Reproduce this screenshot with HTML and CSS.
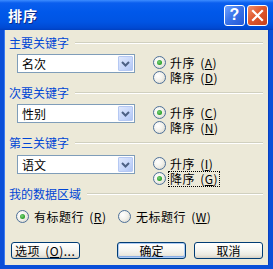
FILE: index.html
```html
<!DOCTYPE html>
<html>
<head>
<meta charset="utf-8">
<link rel="stylesheet" href="styles.css">
</head>
<body>
<div class="win">
  <div class="titlebar">
    <span class="title">排序</span>
    <div class="tbtns">
      <span class="tb help">?</span>
      <span class="tb close"><svg width="13" height="13" viewBox="0 0 13 13"><path d="M2 2 L11 11 M11 2 L2 11" stroke="#fff" stroke-width="2.2" stroke-linecap="square"/></svg></span>
    </div>
  </div>
  <div class="body">
    <section class="group">
      <div class="ghead"><span class="glabel">主要关键字</span><span class="gline"></span></div>
      <div class="grow">
        <div class="combo"><span class="ctext">名次</span><span class="cbtn"><svg width="9" height="6" viewBox="0 0 9 6"><path d="M1 1 L4.5 4.5 L8 1" fill="none" stroke="#4D6185" stroke-width="2"/></svg></span></div>
        <div class="radios">
          <div class="radio"><span class="rb on"></span><span class="rt">升序 (<u>A</u>)</span></div>
          <div class="radio"><span class="rb"></span><span class="rt">降序 (<u>D</u>)</span></div>
        </div>
      </div>
    </section>
    <section class="group">
      <div class="ghead"><span class="glabel">次要关键字</span><span class="gline"></span></div>
      <div class="grow">
        <div class="combo"><span class="ctext">性别</span><span class="cbtn"><svg width="9" height="6" viewBox="0 0 9 6"><path d="M1 1 L4.5 4.5 L8 1" fill="none" stroke="#4D6185" stroke-width="2"/></svg></span></div>
        <div class="radios">
          <div class="radio"><span class="rb on"></span><span class="rt">升序 (<u>C</u>)</span></div>
          <div class="radio"><span class="rb"></span><span class="rt">降序 (<u>N</u>)</span></div>
        </div>
      </div>
    </section>
    <section class="group g3">
      <div class="ghead"><span class="glabel">第三关键字</span><span class="gline"></span></div>
      <div class="grow">
        <div class="combo"><span class="ctext">语文</span><span class="cbtn"><svg width="9" height="6" viewBox="0 0 9 6"><path d="M1 1 L4.5 4.5 L8 1" fill="none" stroke="#4D6185" stroke-width="2"/></svg></span></div>
        <div class="radios">
          <div class="radio"><span class="rb"></span><span class="rt">升序 (<u>I</u>)</span></div>
          <div class="radio"><span class="rb on"></span><span class="rt focus">降序 (<u>G</u>)</span></div>
        </div>
      </div>
    </section>
    <section class="g4">
      <div class="ghead"><span class="glabel">我的数据区域</span><span class="gline"></span></div>
      <div class="hrow">
        <div class="radio first"><span class="rb on"></span><span class="rt">有标题行 (<u>R</u>)</span></div>
        <div class="radio"><span class="rb"></span><span class="rt">无标题行 (<u>W</u>)</span></div>
      </div>
    </section>
    <div class="buttons">
      <span class="btn first">选项 (<u>O</u>)...</span>
      <span class="btn default push">确定</span>
      <span class="btn">取消</span>
    </div>
  </div>
</div>
</body>
</html>
```
FILE: styles.css
```css
html, body {
  margin: 0;
  padding: 0;
  background: #0a4fd8;
}
.win {
  width: 273px;
  height: 269px;
  display: flex;
  flex-direction: column;
  font-family: "Noto Sans CJK SC", "Liberation Sans", sans-serif;
  font-size: 12px;
  color: #000;
}
.titlebar {
  height: 30px;
  flex: none;
  display: flex;
  align-items: center;
  padding: 0 5px 0 8px;
  background: linear-gradient(#3d8cff 0, #0a5eee 3px, #0058ea 12px, #0054e3 22px, #0049d2 28px, #0040c0 30px);
}
.title {
  color: #fff;
  font-weight: bold;
  font-size: 14px;
  letter-spacing: 1px;
  text-shadow: 1px 1px 0 #0a2b8a;
  flex: 1;
}
.tbtns {
  display: flex;
  gap: 2px;
}
.tb {
  width: 21px;
  height: 21px;
  box-sizing: border-box;
  border: 1px solid #fff;
  border-radius: 3px;
  display: flex;
  align-items: center;
  justify-content: center;
  color: #fff;
}
.help {
  background: linear-gradient(135deg, #6fa2ff 0%, #3a74ea 45%, #2459d6 100%);
  font-family: "Liberation Sans", sans-serif;
  font-weight: bold;
  font-size: 16px;
}
.close {
  background: linear-gradient(135deg, #f0906c 0%, #e0582d 45%, #c8401a 100%);
}
.body {
  flex: 1;
  min-height: 0;
  background: #ece9d8;
  border: 4px solid #0a4fd8;
  border-top: 0;
  box-shadow: inset 1px 0 0 #3a7af0, inset -1px 0 0 #0840c0;
  padding: 6px 6px 0 5px;
  display: flex;
  flex-direction: column;
}
.group {
  height: 50px;
  flex: none;
}
.g3 {
  height: 51px;
}
.g4 {
  flex: none;
}
.ghead {
  height: 14px;
  display: flex;
  align-items: center;
}
.glabel {
  color: #0046d5;
  line-height: 14px;
  white-space: nowrap;
}
.gline {
  flex: 1;
  margin-left: 6px;
  border-top: 1px solid #d0d0bf;
  border-bottom: 1px solid #ffffff;
}
.grow {
  display: flex;
  margin-top: 4px;
}
.g3 .grow {
  margin-top: 5px;
}
.combo {
  margin-left: 8px;
  width: 118px;
  height: 19px;
  box-sizing: border-box;
  border: 1px solid #7f9db9;
  background: #fff;
  display: flex;
  align-items: center;
  padding: 1px;
}
.ctext {
  flex: 1;
  padding-left: 3px;
  line-height: 15px;
}
.cbtn {
  width: 15px;
  height: 15px;
  box-sizing: border-box;
  border: 1px solid #b5c8f3;
  border-radius: 1px;
  background: linear-gradient(135deg, #dfe8fc 0%, #c6d6fb 60%, #b0c5f4 100%);
  display: flex;
  align-items: center;
  justify-content: center;
}
.radios {
  margin-left: 18px;
  margin-top: 1px;
  display: flex;
  flex-direction: column;
}
.radio {
  height: 15px;
  display: flex;
  align-items: center;
  gap: 3px;
  white-space: nowrap;
}
.rb {
  flex: none;
  width: 13px;
  height: 13px;
  box-sizing: border-box;
  border-radius: 50%;
  border: 1px solid #4d7099;
  background: radial-gradient(circle at 35% 35%, #ffffff 0%, #f3f2ec 45%, #d4d2c6 100%);
  display: flex;
  align-items: center;
  justify-content: center;
}
.rb.on::after {
  content: "";
  width: 5px;
  height: 5px;
  border-radius: 50%;
  background: radial-gradient(circle at 40% 40%, #7ed27e 0%, #2fa52f 60%, #1c8a1c 100%);
}
.rt {
  line-height: 14px;
  padding: 0 1px;
  letter-spacing: 0.5px;
  word-spacing: 2px;
}
.focus {
  outline: 1px dotted #000;
}
.hrow {
  display: flex;
  margin-top: 8px;
  margin-left: 7px;
}
.hrow .radio {
  gap: 4px;
}
.hrow .first {
  width: 102px;
}
.buttons {
  flex: none;
  display: flex;
  gap: 8px;
  margin-top: 18px;
  padding-left: 2px;
}
.btn {
  width: 69px;
  height: 17px;
  box-sizing: border-box;
  border: 1px solid #003c74;
  border-radius: 3px;
  background: linear-gradient(#ffffff 0%, #f6f6f2 45%, #ebe9e0 80%, #d6d0c5 100%);
  display: flex;
  align-items: center;
  justify-content: center;
  line-height: 14px;
  white-space: nowrap;
}
.btn.first {
  justify-content: flex-start;
  padding-left: 3px;
  word-spacing: 2px;
  letter-spacing: 0.5px;
}
.default {
  box-shadow: inset 0 0 0 1px #aecbf3, inset 0 -1px 0 1px #89ade4;
}
.push {
  margin-left: auto;
}
```
